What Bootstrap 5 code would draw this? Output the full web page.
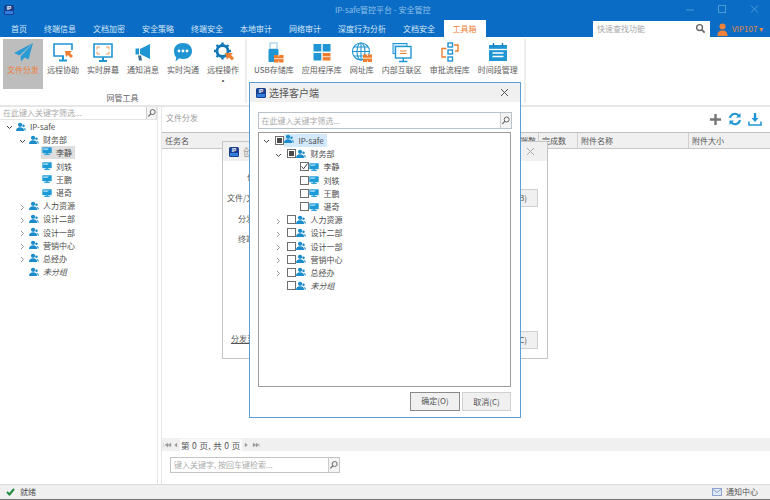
<!DOCTYPE html>
<html lang="zh-CN">
<head>
<meta charset="utf-8">
<title>IP-safe管控平台 - 安全管控</title>
<link rel="stylesheet" href="https://cdn.jsdelivr.net/npm/bootstrap@5.3.0/dist/css/bootstrap.min.css">
<style>
html,body{height:500px;overflow:hidden}
body{font-family:"Noto Sans CJK SC","Liberation Sans",sans-serif;font-size:8px;line-height:12px;color:#4a4a4a;background:#fff;position:relative}
.app-shell{height:500px;width:770px}
.head-blue{background:#0a6cc4;height:37px;flex:none}
.title-row{height:20px;position:relative;padding:5px 0 0 4px}
.title-logo{width:10px;height:10px}
.title-text{position:absolute;left:335px;top:4px;font-size:8px;color:#8fc0ea;white-space:nowrap}
.win-ctl{position:absolute;top:2px;width:12px;height:14px}
.ctl-min{left:685px}.ctl-max{left:717px}.ctl-close{left:749px}
.tab-row{height:17px;padding-left:2.5px}
.tab-item{padding:3px 8.5px 0;color:#d5e7f7;white-space:nowrap;height:17px}
.tab-on{background:#fff;color:#ef8238;margin-left:0;padding-left:9px;padding-right:9px}
.quick-find{position:absolute;left:593px;top:21px;width:117px;height:16px;background:#fff;color:#a8a8a8;padding:2px 4px}
.vip-zone{position:absolute;left:717px;top:21px;height:16px;color:#e98a3c;font-size:8px}
.ribbon{height:70px;flex:none;border-bottom:2px solid #e6e6e6}
.rib-group{border-right:2px solid #eee;height:64px;margin-top:2px;padding-left:3px;position:relative;flex:none}
.grp-net{width:247px}.grp-lib{width:279px}
.rib-btn{padding:0 4px;height:50px;text-align:center;white-space:nowrap;color:#5c5c5c;display:flex;flex-direction:column;align-items:center}
.rib-btn svg{width:24px;height:24px;margin-top:1px;flex:none}
.rib-on{background:#bdbdbd;color:#ee7d36}
.rib-dot{display:block;line-height:10px}
.rib-name{position:absolute;left:0;right:0;top:53px;text-align:center;color:#666}
.content-row{min-height:0}
.side-pane{width:158px;flex:none;border-right:1px solid #e6e6e6}
.filter-line{height:13px;border-bottom:1px solid #e4e4e4;color:#aaa;background:#fff;padding-left:3px;line-height:12px}
.find-btn{width:11px;height:12px;border-left:1px solid #ccc;border-right:1px solid #ddd;flex:none;background:#f4f4f4}
.tree-row{height:13.2px;white-space:nowrap;line-height:13px;color:#4c4c4c;position:relative}
.slot-chev{width:12px;flex:none;text-align:center}
.slot-ico{width:12px;flex:none}
.slot-ico svg,.dico svg{width:10px;height:10px;display:block;margin:auto}
.tree-label{margin-left:3px}
.lbl-dlg{margin-left:4px}
.lv1{padding-left:3px}.lv2{padding-left:16px}.lv3{padding-left:29px}
.sel-grey{background:#dedede;padding:0 3px 0 0}
.main-pane{margin-left:3px;border-left:1px solid #e6e6e6;min-width:0}
.tool-line{height:25px;color:#9a9a9a;padding:5px 0 0 4px;position:relative;flex:none}
.tool-icons{position:absolute;right:8px;top:5px;gap:6px}
.grid-head{height:17px;background:#f0f0f0;border-top:1px solid #bfbfbf;border-bottom:1px solid #c8c8c8;color:#555;line-height:15px;flex:none}
.gcol{border-right:1px solid #cfcfcf;padding-left:3px;height:100%;flex:none;white-space:nowrap;overflow:hidden}
.col-task{width:348px}
.col-count{width:29px;padding-left:2px}
.col-done{width:39px}
.col-file{width:111px}
.pager-row{height:13px;background:#f0f0f0;color:#777;flex:none;padding-left:1px}
.pager-txt{background:#fafafa;color:#555;padding:0 1px;font-size:8.5px;letter-spacing:.35px;margin:0 2px;white-space:nowrap}
.key-zone{height:33px;flex:none}
.key-box{width:170px;height:16px;border:1px solid #c4c4c4;margin:6px 0 0 8px;color:#aaa;padding-left:3px;line-height:14px}
.key-btn{width:11px;height:14px;border-left:1px solid #ccc;background:#f4f4f4;flex:none}
.status-row{height:16px;flex:none;background:#f0f0f0;border-top:1px solid #dcdcdc;border-bottom:1px solid #777;padding:0 12px 0 6px;color:#555}
.status-txt{margin-left:1px}
.win-back{position:absolute;left:222px;top:141px;width:326px;height:218px;background:#fff;border:1px solid #c4c4c4}
.win-front{position:absolute;left:249px;top:82px;width:272px;height:336px;background:#fff;border:1.5px solid #5b9fd2}
.win-title{height:19px;background:#f0f0f0;flex:none}
.title-pad-back{padding:0 12px 0 6px}
.title-pad-front{padding:0 11px 0 6px}
.dlg-logo{width:10px;height:10px;flex:none}
.back-title-txt{font-size:10px;color:#999;margin-left:4px}
.back-lab{position:absolute;white-space:nowrap;color:#555}
.lab-a{left:24px;top:29px}.lab-b{left:4px;top:50px}.lab-c{left:15px;top:71px}.lab-d{left:15px;top:91px}.lab-e{left:8px;top:191px}
.back-btn{position:absolute;left:272px;width:43px;height:18px;background:#f0f0f0;border:1px solid #cfcfcf;text-align:right;padding:2px 10px 2px 0;color:#555}
.btn-b{top:47px}.btn-c{top:189px}
.front-title-txt{font-size:10px;color:#555;margin-left:3px}
.dlg-filter{margin:10px 8.5px 0 7.5px;height:17px;border:1px solid #b9c2c9;color:#aaa;padding-left:3px;line-height:15px;flex:none}
.dlg-find{width:11px;height:15px;background:#f4f4f4;border-left:1px solid #ccc;flex:none}
.dlg-tree{margin:3px 9px 0 7.5px;height:255px;border:1px solid #9c9c9c;padding-top:1px;flex:none}
.ck{width:9px;height:9px;border:1px solid #6e6e6e;background:#fff;flex:none;margin-left:2px;position:relative;display:flex;align-items:center;justify-content:center}
.ck-mix::after{content:"";width:5px;height:5px;background:#4a4a4a}
.ck svg{width:9px;height:9px;flex:none}
.dico{width:11px;flex:none}
.dl1{padding-left:2px}.dl2{padding-left:14px}.dl3{padding-left:27px}
.sel-blue{background:#d2e8fb;padding-right:3px}
.dlg-foot{padding:5px 9px 0 0;gap:2px;justify-content:flex-end}
.foot-btn{width:49px;height:19px;background:#f0f0f0;border:1px solid #d0d0d0;color:#555;text-align:center;line-height:17px;white-space:nowrap}
.foot-main{border:1.5px solid #8a8a8a;width:50px;line-height:16px}
.tiny-i{font-style:italic}
</style>
</head>
<body>
<svg width="0" height="0" class="d-none" aria-hidden="true">
<defs>
<symbol id="i-group" viewBox="0 0 16 16"><circle cx="6.500" cy="4.500" r="3.400" fill="#1b8ccb"/><path d="M0 14.500c0-4 2.600-6 6.500-6s6.500 2 6.500 6z" fill="#1b8ccb"/><circle cx="12" cy="6" r="2" fill="#1b8ccb"/><path d="M11 9.300c3 0 4.800 1.400 4.800 4.200h-2c0-2-.8-3.200-2.800-4.200z" fill="#1b8ccb"/></symbol>
<symbol id="i-pc" viewBox="0 0 16 16"><rect x=".5" y="2" width="15" height="9.500" rx="1" fill="#1c9ad8"/><path d="M2 3.500h9l-2 3h-7z" fill="#8fd0f0"/><rect x="6" y="11.500" width="4" height="1.500" fill="#1c9ad8"/><rect x="3.500" y="13" width="9" height="1.500" fill="#1c9ad8"/></symbol>
<symbol id="i-mag" viewBox="0 0 12 12"><circle cx="6.800" cy="4.800" r="3" fill="none" stroke="#666" stroke-width="1.200"/><path d="M4.600 7l-3 3" stroke="#666" stroke-width="1.500"/></symbol>
<symbol id="i-logo" viewBox="0 0 10 10"><rect width="10" height="10" rx="1.500" fill="#1a3f8f"/><rect x="1" y="6" width="8" height="3" fill="#2f7fe0"/><text x="5" y="5.200" font-size="4.800" font-weight="700" fill="#fff" text-anchor="middle" font-family="Liberation Sans">IP</text></symbol>
<symbol id="i-down" viewBox="0 0 7 5"><path d="M1 1l2.500 2.500L6 1" fill="none" stroke="#444"/></symbol>
<symbol id="i-right" viewBox="0 0 5 7"><path d="M1 1l2.500 2.500L1 6" fill="none" stroke="#999"/></symbol>
</defs>
</svg>

<div class="app-shell d-flex flex-column">
  <header class="head-blue">
    <div class="title-row">
      <svg class="title-logo d-block"><use href="#i-logo"/></svg>
      <span class="title-text">IP-safe管控平台 - 安全管控</span>
      <svg class="win-ctl ctl-min" viewBox="0 0 12 14"><path d="M1 8h8" stroke="#4d9ad9" stroke-width="1"/></svg>
      <svg class="win-ctl ctl-max" viewBox="0 0 12 14"><rect x="1.500" y="3.500" width="7" height="7" fill="none" stroke="#4d9ad9"/></svg>
      <svg class="win-ctl ctl-close" viewBox="0 0 12 14"><path d="M2 3.500l7 7m0-7l-7 7" stroke="#4d9ad9"/></svg>
    </div>
    <nav class="tab-row d-flex">
      <div class="tab-item">首页</div><div class="tab-item">终端信息</div><div class="tab-item">文档加密</div><div class="tab-item">安全策略</div><div class="tab-item">终端安全</div><div class="tab-item">本地审计</div><div class="tab-item">网络审计</div><div class="tab-item">深度行为分析</div><div class="tab-item">文档安全</div><div class="tab-item tab-on">工具箱</div>
    </nav>
    <div class="quick-find d-flex justify-content-between"><span>快速查找功能</span><svg width="11" height="11" viewBox="0 0 12 12"><circle cx="5" cy="5" r="3.200" fill="none" stroke="#666" stroke-width="1.500"/><path d="M7.500 7.500l3 3" stroke="#666" stroke-width="1.800"/></svg></div>
    <div class="vip-zone d-flex align-items-center gap-1"><svg width="11" height="13" viewBox="0 0 11 13"><circle cx="5.500" cy="3.500" r="3" fill="#ef8238"/><path d="M.5 13c0-4 1.500-5.500 5-5.500s5 1.500 5 5.500z" fill="#ef8238"/></svg><span>VIP107 ▾</span></div>
  </header>

  <section class="ribbon d-flex">
    <div class="rib-group grp-net d-flex">
      <div class="rib-btn rib-on"><svg viewBox="0 0 24 24"><path d="M22 3L3 13l5.500 2.500z" fill="#2b9bd6"/><path d="M22 3L9.500 16.500l.5 5 3.500-4 4 2z" fill="#2b9bd6"/></svg>文件分发</div>
      <div class="rib-btn"><svg viewBox="0 0 24 24"><path d="M3 4h18v12H3z" fill="none" stroke="#1f95d3" stroke-width="1.600"/><path d="M8 20.500h8M12 16v4" stroke="#1f95d3" stroke-width="2"/><rect x="13" y="10" width="9" height="9" fill="#fff"/><path d="M14 11h7l-2 2 3 3-2 2-3-3-2 2z" fill="#ef7d2e"/></svg>远程协助</div>
      <div class="rib-btn"><svg viewBox="0 0 24 24"><path d="M3 4h18v13H3z" fill="none" stroke="#1f95d3" stroke-width="1.600"/><path d="M8 21h8M12 17v4" stroke="#1f95d3" stroke-width="2"/><path d="M6 9.500v-2.500h3M15 7h3v2.500M18 11.500v2.500h-3M9 14h-3v-2.500" fill="none" stroke="#ef9a5e" stroke-width="1"/></svg>实时屏幕</div>
      <div class="rib-btn"><svg viewBox="0 0 24 24"><path d="M9 9l10-5v15L9 14z" fill="#1f95d3"/><rect x="4.500" y="8.500" width="3.500" height="6" fill="#1f95d3"/><path d="M7 15.500h3l1 5H8z" fill="#3a6d8c"/></svg>通知消息</div>
      <div class="rib-btn"><svg viewBox="0 0 24 24"><path d="M12 3c5.500 0 9 3.500 9 8s-3.500 8-9 8c-1.500 0-2.800-.3-3.800-.7L4.500 21.500l.8-4C3.800 16 3 13.800 3 11c0-4.500 3.500-8 9-8z" fill="#1f95d3"/><circle cx="8" cy="11" r="1.400" fill="#fff"/><circle cx="12" cy="11" r="1.400" fill="#fff"/><circle cx="16" cy="11" r="1.400" fill="#fff"/></svg>实时沟通</div>
      <div class="rib-btn"><svg viewBox="0 0 24 24"><circle cx="11.500" cy="11" r="5.500" fill="none" stroke="#1278b8" stroke-width="2.800"/><path d="M11.500 2.500v3M11.500 16.500v3M3 11h3M17 11h3M5.500 5l2 2M15.500 15l2 2M17.500 5l-2 2M5.500 17l2-2" stroke="#1278b8" stroke-width="2.400"/><path d="M14 13h8l-2 2 3 3-2 2.500-3-3-2 2z" fill="#ef7d2e"/></svg>远程操作<b class="rib-dot">·</b></div>
      <div class="rib-name">网管工具</div>
    </div>
    <div class="rib-group grp-lib d-flex">
      <div class="rib-btn"><svg viewBox="0 0 24 24"><rect x="8" y="3" width="7" height="6" fill="none" stroke="#8fc8e8"/><rect x="6.500" y="9" width="10" height="13" rx="1" fill="#1f95d3"/><rect x="12" y="15" width="9.500" height="7.500" fill="#ef7d2e"/><path d="M12 18.700h9.500M16.700 15v1.500M16.700 21v1.500" stroke="#fff" stroke-width=".8"/></svg>USB存储库</div>
      <div class="rib-btn"><svg viewBox="0 0 24 24"><rect x="3.500" y="4" width="7.800" height="7.500" fill="#1f95d3"/><rect x="12.700" y="4" width="7.800" height="7.500" fill="#1f95d3"/><rect x="3.500" y="13" width="7.800" height="7.500" fill="#1f95d3"/><rect x="12.700" y="13" width="7.800" height="7.500" fill="#ef7d2e"/><path d="M12.700 16.700h7.800" stroke="#fff" stroke-width=".8"/></svg>应用程序库</div>
      <div class="rib-btn"><svg viewBox="0 0 24 24"><g fill="none" stroke="#1f95d3" stroke-width="1.100"><circle cx="11" cy="11.500" r="8.500"/><ellipse cx="11" cy="11.500" rx="4" ry="8.500"/><path d="M2.500 11.500h17M4 7h14M4 16h14M11 3v17"/></g><rect x="13" y="14.500" width="9" height="7.500" fill="#ef7d2e"/><path d="M13 18.200h9M17.500 14.500v1.500M17.500 20.500v1.500" stroke="#fff" stroke-width=".8"/></svg>网址库</div>
      <div class="rib-btn"><svg viewBox="0 0 24 24"><rect x="3" y="3.500" width="14" height="10" fill="#cfe8f6" stroke="#1f95d3"/><rect x="5.500" y="6.500" width="15.500" height="11.500" fill="#fff" stroke="#1f95d3" stroke-width="1.400"/><path d="M13.200 18v3M9 21.500h8.500" stroke="#1f95d3" stroke-width="1.400"/><path d="M10 11h6.500M16.500 13.500h-6.500" stroke="#ef7d2e" stroke-width="1.200"/></svg>内部互联区</div>
      <div class="rib-btn"><svg viewBox="0 0 24 24"><rect x="10" y="3" width="4.500" height="4" fill="none" stroke="#1f95d3" stroke-width="1.400"/><rect x="10" y="10" width="4.500" height="4" fill="none" stroke="#1f95d3" stroke-width="1.400"/><rect x="10" y="17" width="4.500" height="4" fill="none" stroke="#1f95d3" stroke-width="1.400"/><path d="M16 5h4v6h-3M8.500 8.500H4v8.500h4" fill="none" stroke="#ef7d2e" stroke-width="1.400"/></svg>审批流程库</div>
      <div class="rib-btn"><svg viewBox="0 0 24 24"><rect x="3" y="5" width="18" height="16" fill="#1f95d3"/><path d="M7.500 3v4M16.500 3v4" stroke="#1b7ab0" stroke-width="1.400"/><path d="M3 9.500h18" stroke="#fff" stroke-width="1.300"/><path d="M6.500 13h11M6.500 16.500h11" stroke="#fff" stroke-width="1.300"/></svg>时间段管理</div>
    </div>
  </section>

  <div class="content-row d-flex flex-grow-1">
    <aside class="side-pane">
      <div class="filter-line d-flex justify-content-between"><span>在此键入关键字筛选...</span><div class="find-btn"><svg class="d-block" width="10" height="12"><use href="#i-mag"/></svg></div></div>
      <div class="tree-row d-flex align-items-center lv1"><span class="slot-chev"><svg width="7" height="5"><use href="#i-down"/></svg></span><span class="slot-ico"><svg><use href="#i-group"/></svg></span><span class="tree-label">IP-safe</span></div>
      <div class="tree-row d-flex align-items-center lv2"><span class="slot-chev"><svg width="7" height="5"><use href="#i-down"/></svg></span><span class="slot-ico"><svg><use href="#i-group"/></svg></span><span class="tree-label">财务部</span></div>
      <div class="tree-row d-flex align-items-center lv3"><span class="slot-chev"></span><span class="d-flex sel-grey"><span class="slot-ico"><svg><use href="#i-pc"/></svg></span><span class="tree-label">李静</span></span></div>
      <div class="tree-row d-flex align-items-center lv3"><span class="slot-chev"></span><span class="slot-ico"><svg><use href="#i-pc"/></svg></span><span class="tree-label">刘轶</span></div>
      <div class="tree-row d-flex align-items-center lv3"><span class="slot-chev"></span><span class="slot-ico"><svg><use href="#i-pc"/></svg></span><span class="tree-label">王鹏</span></div>
      <div class="tree-row d-flex align-items-center lv3"><span class="slot-chev"></span><span class="slot-ico"><svg><use href="#i-pc"/></svg></span><span class="tree-label">谌奇</span></div>
      <div class="tree-row d-flex align-items-center lv2"><span class="slot-chev"><svg width="5" height="7"><use href="#i-right"/></svg></span><span class="slot-ico"><svg><use href="#i-group"/></svg></span><span class="tree-label">人力资源</span></div>
      <div class="tree-row d-flex align-items-center lv2"><span class="slot-chev"><svg width="5" height="7"><use href="#i-right"/></svg></span><span class="slot-ico"><svg><use href="#i-group"/></svg></span><span class="tree-label">设计二部</span></div>
      <div class="tree-row d-flex align-items-center lv2"><span class="slot-chev"><svg width="5" height="7"><use href="#i-right"/></svg></span><span class="slot-ico"><svg><use href="#i-group"/></svg></span><span class="tree-label">设计一部</span></div>
      <div class="tree-row d-flex align-items-center lv2"><span class="slot-chev"><svg width="5" height="7"><use href="#i-right"/></svg></span><span class="slot-ico"><svg><use href="#i-group"/></svg></span><span class="tree-label">营销中心</span></div>
      <div class="tree-row d-flex align-items-center lv2"><span class="slot-chev"><svg width="5" height="7"><use href="#i-right"/></svg></span><span class="slot-ico"><svg><use href="#i-group"/></svg></span><span class="tree-label">总经办</span></div>
      <div class="tree-row d-flex align-items-center lv2"><span class="slot-chev"></span><span class="slot-ico"><svg><use href="#i-group"/></svg></span><span class="tree-label tiny-i">未分组</span></div>
    </aside>

    <main class="main-pane flex-grow-1 d-flex flex-column">
      <div class="tool-line">文件分发
        <div class="tool-icons d-flex align-items-center">
          <svg width="13" height="13" viewBox="0 0 14 14"><path d="M7 1v12M1 7h12" stroke="#777" stroke-width="2.600"/></svg>
          <svg width="14" height="14" viewBox="0 0 14 14"><path d="M2 6a5 5 0 0 1 9-2M12 8a5 5 0 0 1-9 2" fill="none" stroke="#1f95d3" stroke-width="2"/><path d="M12.500 1v4.500H8zM1.500 13V8.500H6z" fill="#1f95d3"/></svg>
          <svg width="14" height="14" viewBox="0 0 14 14"><path d="M7 1v6" stroke="#1f95d3" stroke-width="2.400"/><path d="M3.500 6h7L7 10z" fill="#1f95d3"/><path d="M1 9.500v3.500h12V9.500" fill="none" stroke="#1f95d3" stroke-width="1.500"/></svg>
        </div>
      </div>
      <div class="grid-head d-flex">
        <div class="gcol col-task">任务名</div>
        <div class="gcol col-count">终端数</div>
        <div class="gcol col-done">完成数</div>
        <div class="gcol col-file">附件名称</div>
        <div class="gcol flex-grow-1 border-0">附件大小</div>
      </div>
      <div class="flex-grow-1"></div>
      <div class="pager-row d-flex align-items-center">
        <svg width="15" height="6" viewBox="0 0 15 6"><path d="M.5 1v4M5 1L2 3l3 2zM8 1L5 3l3 2zM14 1l-2.500 2L14 5z" fill="#999" stroke="#999" stroke-width=".3"/></svg>
        <span class="pager-txt">第 0 页, 共 0 页</span>
        <svg width="18" height="6" viewBox="0 0 18 6"><path d="M1 1l2.500 2L1 5zM9 1l3 2-3 2zM12 1l3 2-3 2zM15.500 1v4" fill="#999" stroke="#999" stroke-width=".3"/></svg>
      </div>
      <div class="key-zone">
        <div class="key-box d-flex justify-content-between"><span>键入关键字, 按回车键检索...</span><div class="key-btn"><svg class="d-block" width="10" height="14"><use href="#i-mag"/></svg></div></div>
      </div>
    </main>
  </div>

  <footer class="status-row d-flex align-items-center justify-content-between">
    <span class="d-flex align-items-center gap-1"><svg width="9" height="8" viewBox="0 0 9 8"><path d="M1 4l2.500 2.500L8 1" fill="none" stroke="#1e8a3c" stroke-width="2"/></svg><span class="status-txt">就绪</span></span>
    <span class="d-flex align-items-center gap-1"><svg width="10" height="8" viewBox="0 0 10 8"><rect x=".5" y=".5" width="9" height="7" fill="#dfe6f4" stroke="#8da4cf"/><path d="M.5 1l4.500 3.500L9.500 1" fill="none" stroke="#8da4cf"/></svg>通知中心</span>
  </footer>
</div>

<div class="win-back" role="dialog">
  <div class="win-title title-pad-back d-flex align-items-center justify-content-between"><span class="d-flex align-items-center"><svg class="dlg-logo"><use href="#i-logo"/></svg><span class="back-title-txt">创建任务</span></span><svg width="9" height="9" viewBox="0 0 9 9"><path d="M1 1l7 7m0-7l-7 7" stroke="#aaa"/></svg></div>
  <span class="back-lab lab-a">任务名</span>
  <span class="back-lab lab-b">文件/文件夹</span>
  <span class="back-lab lab-c">分发方式</span>
  <span class="back-lab lab-d">终端范围</span>
  <span class="back-lab lab-e text-decoration-underline">分发至</span>
  <div class="back-btn btn-b">(B)</div>
  <div class="back-btn btn-c">(C)</div>
</div>

<div class="win-front d-flex flex-column" role="dialog">
  <div class="win-title title-pad-front d-flex align-items-center justify-content-between"><span class="d-flex align-items-center"><svg class="dlg-logo"><use href="#i-logo"/></svg><span class="front-title-txt">选择客户端</span></span><svg width="9" height="9" viewBox="0 0 9 9"><path d="M1 1l7 7m0-7l-7 7" stroke="#555"/></svg></div>
  <div class="dlg-filter d-flex justify-content-between"><span>在此键入关键字筛选...</span><div class="dlg-find"><svg class="d-block" width="10" height="15"><use href="#i-mag"/></svg></div></div>
  <div class="dlg-tree">
    <div class="tree-row d-flex align-items-center dl1"><span class="slot-chev"><svg width="7" height="5"><use href="#i-down"/></svg></span><span class="ck ck-mix"></span><span class="d-flex sel-blue"><span class="dico"><svg><use href="#i-group"/></svg></span><span class="tree-label lbl-dlg">IP-safe</span></span></div>
    <div class="tree-row d-flex align-items-center dl2"><span class="slot-chev"><svg width="7" height="5"><use href="#i-down"/></svg></span><span class="ck ck-mix"></span><span class="dico"><svg><use href="#i-group"/></svg></span><span class="tree-label lbl-dlg">财务部</span></div>
    <div class="tree-row d-flex align-items-center dl3"><span class="slot-chev"></span><span class="ck"><svg viewBox="0 0 9 9"><path d="M1.500 4.500l2 2.300L7.500 1.500" fill="none" stroke="#444"/></svg></span><span class="dico"><svg><use href="#i-pc"/></svg></span><span class="tree-label lbl-dlg">李静</span></div>
    <div class="tree-row d-flex align-items-center dl3"><span class="slot-chev"></span><span class="ck"></span><span class="dico"><svg><use href="#i-pc"/></svg></span><span class="tree-label lbl-dlg">刘轶</span></div>
    <div class="tree-row d-flex align-items-center dl3"><span class="slot-chev"></span><span class="ck"></span><span class="dico"><svg><use href="#i-pc"/></svg></span><span class="tree-label lbl-dlg">王鹏</span></div>
    <div class="tree-row d-flex align-items-center dl3"><span class="slot-chev"></span><span class="ck"></span><span class="dico"><svg><use href="#i-pc"/></svg></span><span class="tree-label lbl-dlg">谌奇</span></div>
    <div class="tree-row d-flex align-items-center dl2"><span class="slot-chev"><svg width="5" height="7"><use href="#i-right"/></svg></span><span class="ck"></span><span class="dico"><svg><use href="#i-group"/></svg></span><span class="tree-label lbl-dlg">人力资源</span></div>
    <div class="tree-row d-flex align-items-center dl2"><span class="slot-chev"><svg width="5" height="7"><use href="#i-right"/></svg></span><span class="ck"></span><span class="dico"><svg><use href="#i-group"/></svg></span><span class="tree-label lbl-dlg">设计二部</span></div>
    <div class="tree-row d-flex align-items-center dl2"><span class="slot-chev"><svg width="5" height="7"><use href="#i-right"/></svg></span><span class="ck"></span><span class="dico"><svg><use href="#i-group"/></svg></span><span class="tree-label lbl-dlg">设计一部</span></div>
    <div class="tree-row d-flex align-items-center dl2"><span class="slot-chev"><svg width="5" height="7"><use href="#i-right"/></svg></span><span class="ck"></span><span class="dico"><svg><use href="#i-group"/></svg></span><span class="tree-label lbl-dlg">营销中心</span></div>
    <div class="tree-row d-flex align-items-center dl2"><span class="slot-chev"><svg width="5" height="7"><use href="#i-right"/></svg></span><span class="ck"></span><span class="dico"><svg><use href="#i-group"/></svg></span><span class="tree-label lbl-dlg">总经办</span></div>
    <div class="tree-row d-flex align-items-center dl2"><span class="slot-chev"></span><span class="ck"></span><span class="dico"><svg><use href="#i-group"/></svg></span><span class="tree-label tiny-i lbl-dlg">未分组</span></div>
  </div>
  <div class="dlg-foot d-flex">
    <div class="foot-btn foot-main">确定(O)</div>
    <div class="foot-btn">取消(C)</div>
  </div>
</div>
<script src="https://cdn.jsdelivr.net/npm/bootstrap@5.3.0/dist/js/bootstrap.bundle.min.js"></script>
</body>
</html>
